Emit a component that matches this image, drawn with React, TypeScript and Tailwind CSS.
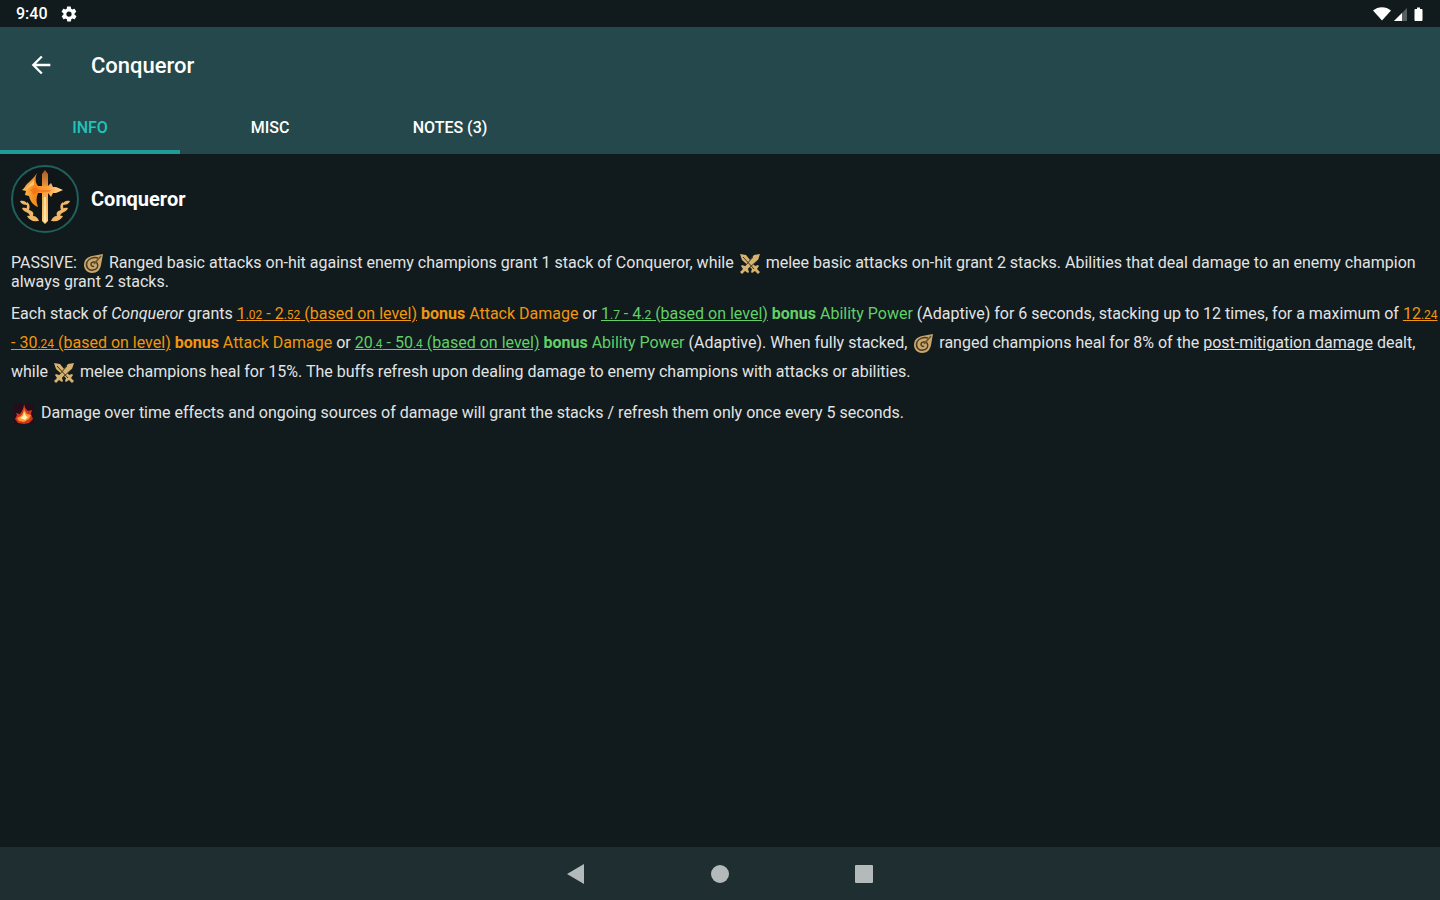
import type { ReactNode } from 'react'

const TABS = ['INFO', 'MISC', 'NOTES (3)']

function GearIcon() {
  return (
    <svg viewBox="0 0 24 24" className="h-[18px] w-[18px]" fill="currentColor" aria-hidden>
      <path d="M19.4 13c0-.3.1-.6.1-1s0-.7-.1-1l2.1-1.7c.2-.1.2-.4.1-.6l-2-3.5c-.1-.2-.4-.3-.6-.2l-2.500 1c-.5-.4-1.100-.7-1.700-1l-.4-2.600c0-.2-.2-.4-.5-.4h-4c-.2 0-.5.2-.5.4l-.4 2.600c-.6.3-1.200.6-1.700 1l-2.500-1c-.2-.1-.5 0-.6.2l-2 3.500c-.1.2-.1.5.1.6L4.600 11c0 .3-.1.6-.1 1s0 .7.1 1l-2.100 1.700c-.2.1-.2.4-.1.6l2 3.500c.1.2.4.3.6.2l2.500-1c.5.4 1.100.7 1.700 1l.4 2.600c0 .2.2.4.5.4h4c.2 0 .5-.2.5-.4l.4-2.600c.6-.3 1.200-.6 1.700-1l2.500 1c.2.1.5 0 .6-.2l2-3.500c.1-.2.1-.5-.1-.6L19.400 13zM12 15.500a3.500 3.500 0 1 1 0-7 3.500 3.500 0 0 1 0 7z" />
    </svg>
  )
}

function StatusIcons() {
  return (
    <svg viewBox="0 0 52 16" className="h-4 w-[52px]" aria-label="Wi-Fi, signal, battery" role="img">
      <path d="M0 4.500C5 0 13 0 18 4.500L9 14.500z" fill="#fff" />
      <path d="M21 15 34 2v13z" fill="#fff" opacity=".3" />
      <path d="M21 15l8-8v8z" fill="#fff" />
      <path d="M44 1.500h3V3h1.500c.6 0 1 .4 1 1v10c0 .6-.4 1-1 1h-6c-.6 0-1-.4-1-1V4c0-.6.4-1 1-1H44z" fill="#fff" />
    </svg>
  )
}

function RuneIcon() {
  return (
    <svg viewBox="0 0 68 68" className="h-[68px] w-[68px] shrink-0" aria-label="Conqueror rune" role="img">
      <defs>
        <linearGradient id="axe" x1="0" y1="0" x2="1" y2="0">
          <stop offset="0" stopColor="#ffc25c" />
          <stop offset=".3" stopColor="#f58a1c" />
          <stop offset=".6" stopColor="#ff9e3a" />
          <stop offset="1" stopColor="#ffe0a0" />
        </linearGradient>
        <linearGradient id="sword" x1="0" y1="0" x2="0" y2="1">
          <stop offset="0" stopColor="#a85a22" />
          <stop offset=".35" stopColor="#f0a040" />
          <stop offset="1" stopColor="#ffcf80" />
        </linearGradient>
      </defs>
      <circle cx="34" cy="34" r="33" fill="#101618" stroke="#1f5f5c" strokeWidth="2" />
      {/* sword */}
      <path d="M34 5l3 4v47l-3 3-3-3V9z" fill="url(#sword)" />
      <path d="M34 32v25" stroke="#fff0bd" strokeWidth="1.500" />
      {/* axe head and spike */}
      <path
        d="M26 8c-3 5-7 8-10 11-2 2-2 4-5 6l4 1-1 4 4 1c1 5 4 9 9 11-2-5-2-9 0-14h10l3 4 2-4h3l7-3-7-3h-3l-2-4-3 3H27c-3-4-3-8-1-13z"
        fill="url(#axe)"
      />
      <path d="M19 25l5-3 5 3h11l-2 2H27l-4 3z" fill="#ee6a18" opacity=".6" />
      <path d="M23 15c-3 3-6 6-8 10 3-3 5-4 8-5z" fill="#ffd98a" opacity=".7" />
      {/* laurel */}
      <g fill="#f0b866">
        <path d="M9 36c4-1 7 1 8 4-4 0-7-1-8-4zM11 43c4-1 7 1 8 4-4 1-7-1-8-4zM16 51c4-1 8 0 11 5-5 1-9-1-11-5z" />
        <path d="M16 37c3 2 3 5 2 8 4 1 5 3 4 6 3 0 5 2 6 5l-3 0c-2-2-4-3-6-4 0-3-2-4-4-5 1-4 1-7 1-10z" />
        <path d="M59 36c-4-1-7 1-8 4 4 0 7-1 8-4zM57 43c-4-1-7 1-8 4 4 1 7-1 8-4zM52 51c-4-1-8 0-11 5 5 1 9-1 11-5z" />
        <path d="M52 37c-3 2-3 5-2 8-4 1-5 3-4 6-3 0-5 2-6 5l3 0c2-2 4-3 6-4 0-3 2-4 4-5-1-4-1-7-1-10z" />
      </g>
    </svg>
  )
}

function RangedIcon() {
  return (
    <svg viewBox="0 0 22 22" className="mx-px -my-1 inline h-[22px] w-[22px] align-middle" aria-hidden>
      <path d="M21 1l-2 11c-1 5-4 8-9 8-5 0-8-4-8-8 0-5 3-8 8-9z" fill="#c9a66b" />
      <path d="M16 5c-4-1-9 0-11 4-2 5 2 9 6 8 4 0 6-4 4-7-2-2-6-1-6 1 0 2 2 3 3 2" fill="none" stroke="#4c3c22" strokeWidth="1.500" />
      <path d="M19 3l-7 8" stroke="#6b532d" strokeWidth="1.500" />
    </svg>
  )
}

function MeleeIcon() {
  return (
    <svg viewBox="0 0 22 22" className="mx-px -my-1 inline h-[22px] w-[22px] align-middle" aria-hidden>
      <path d="M1 1l6 1 9 11 3-1 1 1-2 3 3 3-2 2-3-3-3 2-1-1 1-3L3 7z" fill="#d6b270" />
      <path d="M21 1l-6 1L6 13l-3-1-1 1 2 3-3 3 2 2 3-3 3 2 1-1-1-3L19 7z" fill="#d6b270" />
      <path d="M14 4L6 13M9 16l10-9M4 4l11 12" stroke="#3b3324" strokeWidth="1" />
    </svg>
  )
}

function FlameIcon() {
  return (
    <svg viewBox="0 0 22 22" className="mx-0.5 -my-1 inline h-[22px] w-[22px] align-middle" aria-hidden>
      <rect x="1" y="1" width="20" height="20" fill="#250d1b" />
      <path d="M11 1c1 4 2 5 4 7l4-1-1 4 2 5-4 4-5 1-6-1-3-4 2-4-1-2 4 1c2-3 4-6 4-10z" fill="#cf351d" />
      <path d="M11 4c0 4 2 5 3 7l4 1-2 4-5 3-5-1-2-3 4-2c2-2 3-5 3-9z" fill="#ff9736" />
      <path d="M11 9l2 4 2 1-3 3-5-2 3-2z" fill="#fff0b0" />
    </svg>
  )
}

function Small({ children }: { children: ReactNode }) {
  return <span className="text-xs leading-none">{children}</span>
}

function ScaleLink({ children }: { children: ReactNode }) {
  return (
    <a href="#level" className="underline">
      {children}
    </a>
  )
}

export default function App() {
  return (
    <div className="flex min-h-screen flex-col bg-[#111a1c] font-[Roboto,sans-serif] text-[#e2e4e4]">
      <div className="flex h-[27px] items-center justify-between pr-[15px] pl-4 text-white">
        <div className="flex items-center gap-3">
          <span className="text-base font-medium">9:40</span>
          <GearIcon />
        </div>
        <StatusIcons />
      </div>

      <header className="bg-[#24484b]">
        <div className="flex h-[75px] items-center text-white">
          <button type="button" aria-label="Back" className="ml-[27px] flex h-7 w-7 items-center justify-center">
            <svg viewBox="0 0 24 24" className="h-7 w-7" fill="currentColor" aria-hidden>
              <path d="M20 11H7.830l5.590-5.590L12 4l-8 8 8 8 1.410-1.410L7.830 13H20z" />
            </svg>
          </button>
          <h1 className="ml-9 pt-0.5 text-[22px] font-medium">Conqueror</h1>
        </div>
        <nav role="tablist" className="flex">
          {TABS.map((tab, i) => (
            <button
              key={tab}
              type="button"
              role="tab"
              aria-selected={i === 0}
              className={
                i === 0
                  ? 'h-[52px] w-[180px] border-b-4 border-[#1f9c97] pt-1 text-base font-medium text-[#22c3b9]'
                  : 'h-[52px] w-[180px] border-b-4 border-transparent pt-1 text-base font-medium text-white'
              }
            >
              {tab}
            </button>
          ))}
        </nav>
      </header>

      <main className="flex-1 pt-[11px] pl-[11px] text-base">
        <div className="flex items-center gap-3">
          <RuneIcon />
          <h2 className="text-xl font-bold text-white">Conqueror</h2>
        </div>

        <p className="mt-5 leading-[19px]">
          PASSIVE: <RangedIcon /> Ranged basic attacks on-hit against enemy champions grant 1 stack of Conqueror,
          while <MeleeIcon /> melee basic attacks on-hit grant 2 stacks. Abilities that deal damage to an enemy
          champion always grant 2 stacks.
        </p>

        <p className="mt-2 leading-[29px]">
          Each stack of <i>Conqueror</i> grants{' '}
          <span className="text-[#f0960f]">
            <ScaleLink>
              1<Small>.02</Small> - 2<Small>.52</Small> (based on level)
            </ScaleLink>{' '}
            <b>bonus</b> Attack Damage
          </span>{' '}
          or{' '}
          <span className="text-[#62cf68]">
            <ScaleLink>
              1<Small>.7</Small> - 4<Small>.2</Small> (based on level)
            </ScaleLink>{' '}
            <b>bonus</b> Ability Power
          </span>{' '}
          (Adaptive) for 6 seconds, stacking up to 12 times, for a maximum of{' '}
          <span className="text-[#f0960f]">
            <ScaleLink>
              12<Small>.24</Small> - 30<Small>.24</Small> (based on level)
            </ScaleLink>{' '}
            <b>bonus</b> Attack Damage
          </span>{' '}
          or{' '}
          <span className="text-[#62cf68]">
            <ScaleLink>
              20<Small>.4</Small> - 50<Small>.4</Small> (based on level)
            </ScaleLink>{' '}
            <b>bonus</b> Ability Power
          </span>{' '}
          (Adaptive). When fully stacked, <RangedIcon /> ranged champions heal for 8% of the{' '}
          <a href="#post-mitigation" className="underline">
            post-mitigation damage
          </a>{' '}
          dealt, while <MeleeIcon /> melee champions heal for 15%. The buffs refresh upon dealing damage to enemy
          champions with attacks or abilities.
        </p>

        <p className="mt-3 leading-[29px]">
          <FlameIcon /> Damage over time effects and ongoing sources of damage will grant the stacks / refresh them
          only once every 5 seconds.
        </p>
      </main>

      <footer className="flex h-[53px] items-center justify-center gap-[120px] bg-[#1e2e31] text-[#b3bab9]">
        <button type="button" aria-label="Back">
          <svg viewBox="0 0 24 24" className="h-6 w-6" fill="currentColor" aria-hidden>
            <path d="M3 12 20 2v20z" />
          </svg>
        </button>
        <button type="button" aria-label="Home">
          <svg viewBox="0 0 24 24" className="h-6 w-6" fill="currentColor" aria-hidden>
            <circle cx="12" cy="12" r="9" />
          </svg>
        </button>
        <button type="button" aria-label="Recent apps">
          <svg viewBox="0 0 24 24" className="h-6 w-6" fill="currentColor" aria-hidden>
            <rect x="3" y="3" width="18" height="18" rx="1" />
          </svg>
        </button>
      </footer>
    </div>
  )
}
